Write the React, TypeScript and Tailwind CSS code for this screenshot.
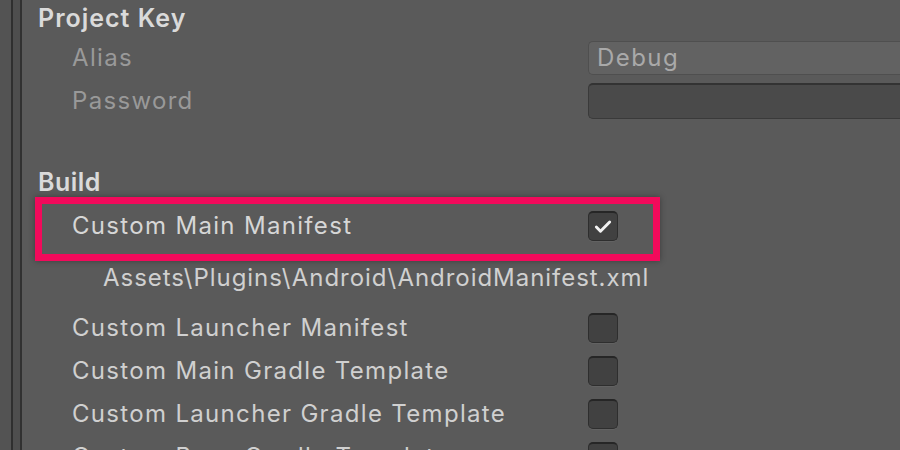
import { Check } from "lucide-react";

const font = { fontFamily: "Inter, 'Noto Sans', sans-serif" };

const Checkbox = ({ checked }: { checked?: boolean }) => (
  <div className="shrink-0 w-[30px] h-[30px] rounded-[5px] bg-[#414141] border border-[#2e2e2e] border-t-[#262626] border-t-2 flex items-center justify-center shadow-[0_1px_0_rgba(255,255,255,0.05)]">
    {checked && <Check className="w-[20px] h-[20px] text-[#f2f2f2]" strokeWidth={3.5} />}
  </div>
);

const ToggleRow = ({ label }: { label: string }) => (
  <div className="shrink-0 flex items-center h-[43px] pl-[50px]">
    <div className="w-[516px] text-[24px] leading-none tracking-[0.055em] text-[#d0d0d0] whitespace-nowrap">{label}</div>
    <Checkbox />
  </div>
);

export default function App() {
  return (
    <div className="w-[900px] h-[450px] overflow-hidden flex bg-[#5a5a5a]" style={font}>
      <div className="w-[11px] bg-[#535353]" />
      <div className="w-[2px] bg-[#2f2f2f]" />
      <div className="w-[7px] bg-[#4e4e4e]" />
      <div className="w-[2px] bg-[#313131]" />
      <div className="flex-1 flex flex-col bg-[#5a5a5a]">
        <div className="shrink-0 h-[36px] flex items-center pl-[16px] text-[25px] leading-none font-semibold tracking-[0.04em] text-[#dadada]">
          Project Key
        </div>
        <div className="shrink-0 flex items-center h-[43px] pl-[50px]">
          <div className="w-[516px] text-[24px] leading-none tracking-[0.055em] text-[#999999]">Alias</div>
          <div className="flex-1 h-[34px] rounded-l-[5px] bg-[#626262] border border-[#4f4f4f] border-r-0 flex items-center pl-[8px] text-[24px] leading-none tracking-[0.06em] text-[#a9a9a9] whitespace-nowrap">
            Debug
          </div>
        </div>
        <div className="shrink-0 flex items-center h-[43px] pl-[50px]">
          <div className="w-[516px] text-[24px] leading-none tracking-[0.055em] text-[#999999]">Password</div>
          <div className="flex-1 h-[36px] rounded-l-[5px] bg-[#4a4a4a] border border-[#3a3a3a] border-t-2 border-t-[#333333] border-r-0" />
        </div>
        <div className="shrink-0 h-[75px] flex items-end pb-[2px] pl-[16px] text-[25px] leading-none font-semibold tracking-[0.02em] text-[#dadada]">
          Build
        </div>
        <div className="shrink-0 ml-[13px] w-[625px] h-[64px] border-[7px] border-[#f20a5b] shadow-[0_0_6px_rgba(0,0,0,0.35)] flex items-center pl-[30px] pb-[6px]">
          <div className="w-[516px] text-[24px] leading-none tracking-[0.055em] text-[#d6d6d6] whitespace-nowrap">Custom Main Manifest</div>
          <Checkbox checked />
        </div>
        <div className="shrink-0 h-[34px] flex items-center pl-[81px] text-[24px] leading-none tracking-[0.04em] text-[#d0d0d0] whitespace-nowrap">
          Assets\Plugins\Android\AndroidManifest.xml
        </div>
        <div className="shrink-0 h-[11px]" />
        <ToggleRow label="Custom Launcher Manifest" />
        <ToggleRow label="Custom Main Gradle Template" />
        <ToggleRow label="Custom Launcher Gradle Template" />
        <ToggleRow label="Custom Base Gradle Template" />
      </div>
    </div>
  );
}
